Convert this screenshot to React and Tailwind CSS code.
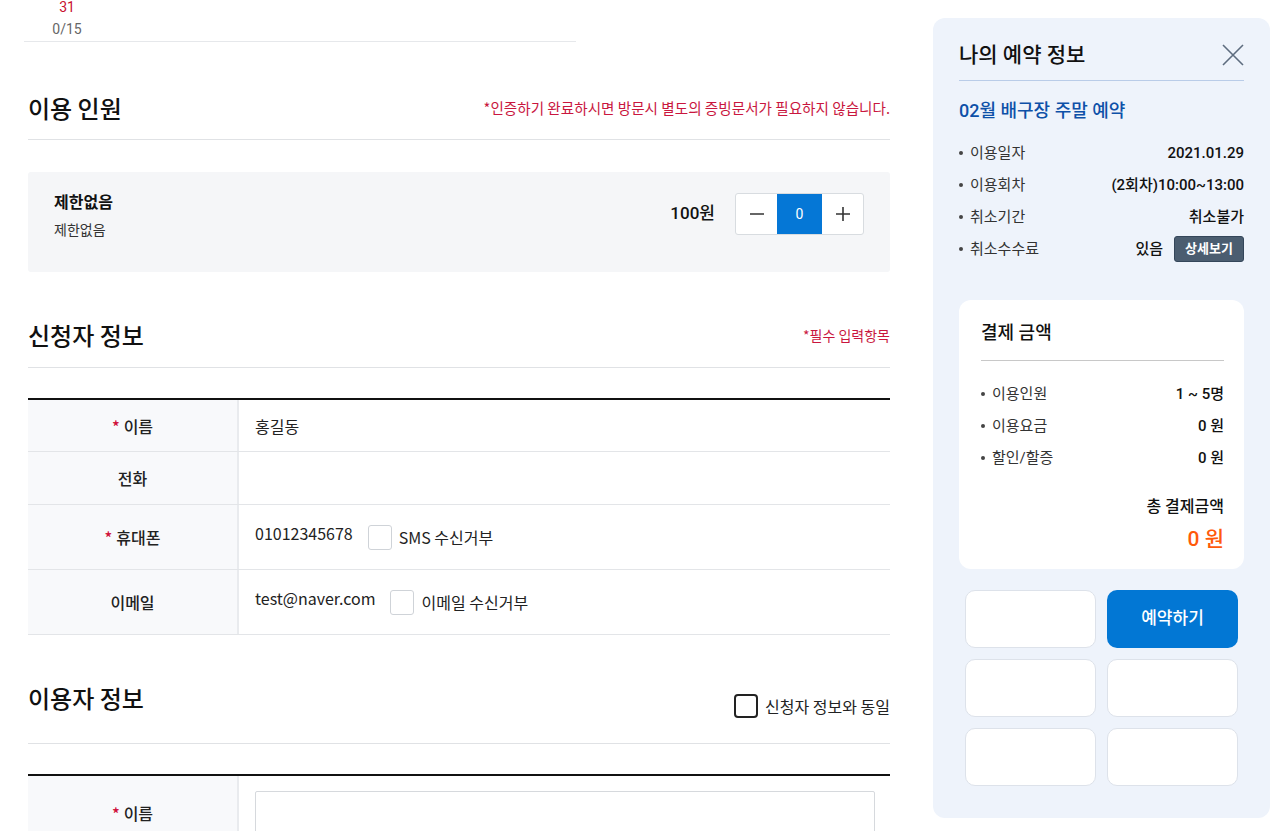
import React from "react";

const roboto = { fontFamily: "Roboto, 'Noto Sans CJK KR', sans-serif" };

function Bullet({ children }) {
  return (
    <span className="flex items-center text-[15px] text-[#333]">
      <span className="mr-[7px] inline-block h-[4px] w-[4px] rounded-full bg-[#444]"></span>
      {children}
    </span>
  );
}

function Checkbox({ className = "" }) {
  return (
    <span
      className={
        "inline-block h-[25px] w-[24px] shrink-0 rounded-[3px] border border-[#cfd3d8] bg-white " +
        className
      }
    ></span>
  );
}

function Row({ label, req, h, children }) {
  return (
    <div className={"flex border-b border-[#e3e5e8] " + h}>
      <div className="flex w-[211px] shrink-0 items-center justify-center border-r-2 border-[#e9ebee] bg-[#f8f9fb] text-[16px] font-medium text-[#222]">
        {req && <span className="mr-[4px] text-[#d0103a]">*</span>}
        {label}
      </div>
      <div className="flex flex-1 items-center pl-[16px] text-[16px] text-[#222]">
        {children}
      </div>
    </div>
  );
}

function SectionHead({ title, right, pb = "pb-[14px]", top = "mt-[49px]" }) {
  return (
    <div className={"flex justify-between border-b border-[#e0e2e5] " + top + " " + pb}>
      <h2 className="text-[24px] font-medium leading-[34px] text-[#111]">{title}</h2>
      {right}
    </div>
  );
}

export default function App() {
  return (
    <div
      className="flex h-[831px] w-[1280px] overflow-hidden bg-white"
      style={{ fontFamily: "'Noto Sans CJK KR', Roboto, sans-serif" }}
    >
      {/* left column */}
      <div className="ml-[28px] w-[862px] shrink-0">
        <div className="-ml-[4px] h-[44px] w-[552px] border-b border-[#e6e8eb]">
          <div className="-mt-[2px] ml-[28px] flex w-[30px] flex-col items-center" style={roboto}>
            <span className="text-[14px] leading-[18px] text-[#c8102e]">31</span>
            <span className="mt-[4px] text-[14px] leading-[18px] text-[#666]">0/15</span>
          </div>
        </div>

        <SectionHead
          title="이용 인원"
          right={
            <span className="self-center text-[14.6px] text-[#c9163e]">
              *인증하기 완료하시면 방문시 별도의 증빙문서가 필요하지 않습니다.
            </span>
          }
        />

        <div className="mt-[32px] flex h-[100px] justify-between rounded-[3px] bg-[#f5f6f8] pl-[26px] pr-[26px]">
          <div className="flex flex-col pt-[18px]">
            <span className="text-[16px] font-bold leading-[22px] text-[#111]">제한없음</span>
            <span className="mt-[7px] text-[14px] leading-[20px] text-[#333]">제한없음</span>
          </div>
          <div className="mt-[21px] flex items-center self-start">
            <span className="mr-[20px] text-[17px] font-medium text-[#111]" style={roboto}>
              100원
            </span>
            <div className="flex h-[42px] overflow-hidden rounded-[3px] border border-[#d8dce0] bg-white">
              <span className="flex w-[41px] items-center justify-center text-[#333]">
                <svg width="16" height="16" viewBox="0 0 16 16">
                  <path d="M1 8h14" stroke="#333" strokeWidth="1.6" />
                </svg>
              </span>
              <span
                className="flex w-[45px] items-center justify-center bg-[#0577d6] text-[14px] text-white"
                style={roboto}
              >
                0
              </span>
              <span className="flex w-[41px] items-center justify-center">
                <svg width="16" height="16" viewBox="0 0 16 16">
                  <path d="M1 8h14M8 1v14" stroke="#333" strokeWidth="1.6" />
                </svg>
              </span>
            </div>
          </div>
        </div>

        <SectionHead
          title="신청자 정보"
          pb="pb-[15px]"
          top="mt-[46px]"
          right={<span className="self-center text-[14px] text-[#c9163e]">*필수 입력항목</span>}
        />

        <div className="mt-[30px] border-t-2 border-[#111]">
          <Row label="이름" req h="h-[52px]">
            홍길동
          </Row>
          <Row label="전화" h="h-[53px]"></Row>
          <Row label="휴대폰" req h="h-[65px]">
            <span className="-mt-[8px]">01012345678</span>
            <Checkbox className="ml-[15px]" />
            <span className="ml-[7px]">SMS 수신거부</span>
          </Row>
          <Row label="이메일" h="h-[65px]">
            <span className="-mt-[8px]">test@naver.com</span>
            <Checkbox className="ml-[14px]" />
            <span className="ml-[8px]">이메일 수신거부</span>
          </Row>
        </div>

        <SectionHead
          title="이용자 정보"
          pb="pb-[25px]"
          top="mt-[46px]"
          right={
            <span className="mt-[13px] flex items-center self-start">
              <span className="inline-block h-[24px] w-[24px] rounded-[4px] border-2 border-[#222] bg-white"></span>
              <span className="ml-[7px] text-[16px] leading-[24px] text-[#222]">신청자 정보와 동일</span>
            </span>
          }
        />

        <div className="mt-[30px] border-t-2 border-[#111]">
          <div className="flex h-[80px]">
            <div className="flex w-[211px] shrink-0 items-start justify-center border-r-2 border-[#e9ebee] bg-[#f8f9fb] pt-[26px] text-[16px] font-medium leading-[22px] text-[#222]">
              <span className="mr-[4px] text-[#d0103a]">*</span>이름
            </div>
            <div className="flex-1 pl-[16px] pt-[15px] pr-[15px]">
              <div className="h-[60px] rounded-[2px] border border-[#d6d9dd] bg-white"></div>
            </div>
          </div>
        </div>
      </div>

      {/* right panel */}
      <div className="ml-[43px] mt-[18px] h-[800px] w-[337px] shrink-0 rounded-[12px] bg-[#eef3fb] px-[26px] pt-[24px]" style={roboto}>
        <div className="flex items-center justify-between border-b border-[#b9cce8] pb-[12px]">
          <span className="text-[21px] font-medium leading-[26px] text-[#111]">나의 예약 정보</span>
          <svg width="22" height="22" viewBox="0 0 22 22">
            <path d="M1 1l20 20M21 1L1 21" stroke="#5d6c7f" strokeWidth="1.6" />
          </svg>
        </div>
        <div className="mt-[18px] text-[18px] font-medium leading-[24px] text-[#0d50a8]">
          02월 배구장 주말 예약
        </div>
        <div className="mt-[19px] flex flex-col gap-[10px]">
          <div className="flex h-[22px] items-center justify-between">
            <Bullet>이용일자</Bullet>
            <span className="text-[15px] font-medium text-[#111]">2021.01.29</span>
          </div>
          <div className="flex h-[22px] items-center justify-between">
            <Bullet>이용회차</Bullet>
            <span className="text-[15px] font-medium text-[#111]">(2회차)10:00~13:00</span>
          </div>
          <div className="flex h-[22px] items-center justify-between">
            <Bullet>취소기간</Bullet>
            <span className="text-[15px] font-medium text-[#111]">취소불가</span>
          </div>
          <div className="flex h-[22px] items-center justify-between">
            <Bullet>취소수수료</Bullet>
            <span className="flex items-center">
              <span className="text-[15px] font-medium text-[#111]">있음</span>
              <span className="ml-[11px] flex h-[26px] w-[70px] items-center justify-center rounded-[3px] border border-[#34465a] bg-[#4b5d70] text-[13px] font-bold text-white">
                상세보기
              </span>
            </span>
          </div>
        </div>

        <div className="mt-[40px] h-[269px] rounded-[12px] bg-white pl-[22px] pr-[20px] pt-[20px]">
          <div className="border-b border-[#c8c8c8] pb-[14px] text-[18px] font-medium leading-[26px] text-[#111]">
            결제 금액
          </div>
          <div className="mt-[22px] flex flex-col gap-[10px]">
            <div className="flex h-[22px] items-center justify-between">
              <Bullet>이용인원</Bullet>
              <span className="text-[15px] font-medium text-[#111]">1 ~ 5명</span>
            </div>
            <div className="flex h-[22px] items-center justify-between">
              <Bullet>이용요금</Bullet>
              <span className="text-[15px] font-medium text-[#111]">0 원</span>
            </div>
            <div className="flex h-[22px] items-center justify-between">
              <Bullet>할인/할증</Bullet>
              <span className="text-[15px] font-medium text-[#111]">0 원</span>
            </div>
          </div>
          <div className="mt-[26px] text-right text-[16px] font-medium leading-[24px] text-[#111]">총 결제금액</div>
          <div className="mt-[6px] text-right text-[21px] font-medium leading-[28px] text-[#ff5a0a]">0 원</div>
        </div>

        <div className="mx-[6px] mt-[21px] grid grid-cols-2 gap-x-[11px] gap-y-[11px]">
          <div className="h-[58px] rounded-[10px] border border-[#dde2ea] bg-white"></div>
          <div className="flex h-[58px] items-center justify-center rounded-[10px] bg-[#0277d4] text-[17px] font-medium text-white">
            예약하기
          </div>
          <div className="h-[58px] rounded-[10px] border border-[#dde2ea] bg-white"></div>
          <div className="h-[58px] rounded-[10px] border border-[#dde2ea] bg-white"></div>
          <div className="h-[58px] rounded-[10px] border border-[#dde2ea] bg-white"></div>
          <div className="h-[58px] rounded-[10px] border border-[#dde2ea] bg-white"></div>
        </div>
      </div>
    </div>
  );
}
